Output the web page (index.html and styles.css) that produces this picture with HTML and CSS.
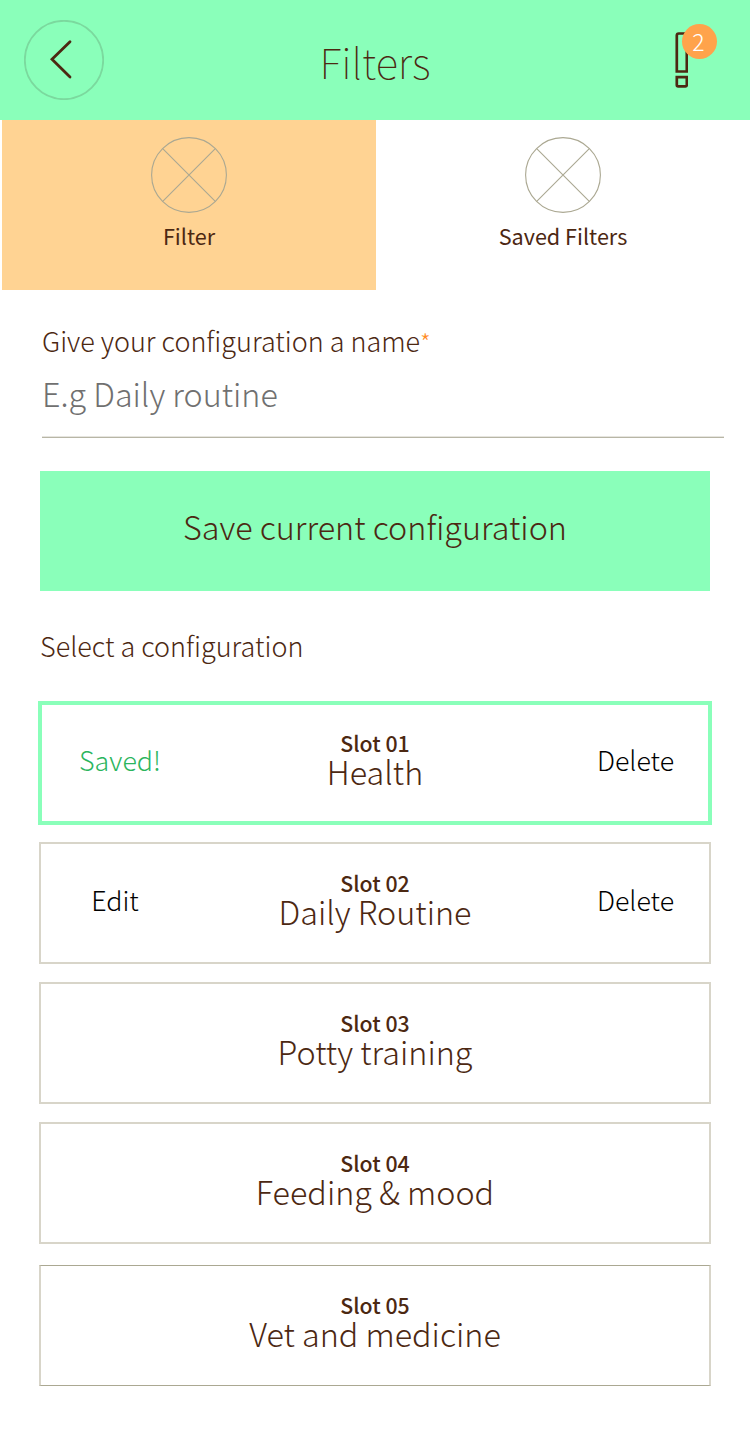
FILE: index.html
```html
<!DOCTYPE html>
<html lang="en">
<head>
<meta charset="utf-8">
<title>Filters</title>
<link rel="stylesheet" href="styles.css">
</head>
<body>
<header class="topbar">
  <button class="back" aria-label="Back"><svg width="80" height="80" viewBox="0 0 80 80"><circle cx="40" cy="40" r="39.2"/><path d="M46 21.7 28 39.3 46 57"/></svg></button>
  <h1 class="title">Filters</h1>
  <div class="alerts">
    <svg width="14" height="58" viewBox="0 0 14 58"><path d="M4.8 3.5H12.8V41.5H2.8V5.5Q2.8 3.5 4.8 3.5Z"/><path d="M2.8 47.2H12.8V55Q12.8 56.3 11.4 56.3H4.2Q2.8 56.3 2.8 55Z"/></svg>
    <span class="badge">2</span>
  </div>
</header>
<nav class="tabs">
  <a class="tab active"><svg width="76" height="76" viewBox="0 0 76 76"><circle cx="38" cy="38" r="37.4"/><path d="M11.7 11.7 64.3 64.3M64.3 11.7 11.7 64.3"/></svg><span>Filter</span></a>
  <a class="tab"><svg width="76" height="76" viewBox="0 0 76 76"><circle cx="38" cy="38" r="37.4"/><path d="M11.7 11.7 64.3 64.3M64.3 11.7 11.7 64.3"/></svg><span>Saved Filters</span></a>
</nav>
<main class="content">
  <div class="field">
    <label class="label">Give your configuration a name<span class="star">*</span></label>
    <div class="input">E.g Daily routine</div>
  </div>
  <button class="save">Save current configuration</button>
  <h2 class="label select">Select a configuration</h2>
  <section class="slots">
    <article class="slot selected"><span class="action saved">Saved!</span><div class="info"><b>Slot 01</b><span class="name">Health</span></div><span class="action delete">Delete</span></article>
    <article class="slot"><span class="action">Edit</span><div class="info"><b>Slot 02</b><span class="name">Daily Routine</span></div><span class="action delete">Delete</span></article>
    <article class="slot"><div class="info"><b>Slot 03</b><span class="name">Potty training</span></div></article>
    <article class="slot"><div class="info"><b>Slot 04</b><span class="name">Feeding &amp; mood</span></div></article>
    <article class="slot last"><div class="info"><b>Slot 05</b><span class="name">Vet and medicine</span></div></article>
  </section>
</main>
</body>
</html>
```
FILE: styles.css
```css
* { box-sizing: border-box; }
body {
  margin: 0;
  width: 750px;
  height: 1435px;
  background: #fff;
  color: #4c2812;
  font-family: "Noto Sans CJK SC", "Noto Sans", sans-serif;
  font-weight: 300;
}
svg { display: block; fill: none; }
button { padding: 0; border: 0; background: none; color: inherit; font: inherit; }
.topbar {
  display: grid;
  grid-template-columns: 80px 1fr 80px;
  height: 120px;
  padding: 20px 24px 0;
  background: #8affba;
}
.back { width: 80px; height: 80px; }
.back svg { stroke: #4c2812; stroke-width: 2.8; stroke-linecap: round; }
.back circle { stroke: #7bd99e; stroke-width: 1.8; }
.title { margin: 0; padding-top: 11px; text-align: center; font-size: 42px; line-height: 60px; font-weight: 100; }
.alerts { position: relative; padding: 10px 0 0 28px; }
.alerts svg { stroke: #4c2812; stroke-width: 2.7; }
.badge {
  position: absolute; left: 36px; top: 4px; width: 35px; height: 35px;
  border-radius: 50%; background: #ffa34b; color: #fff;
  font-size: 23px; line-height: 35px; text-align: center; padding-right: 2px;
}
.tabs { display: grid; grid-template-columns: 374px 374px; height: 170px; padding-left: 2px; }
.tab { display: flex; flex-direction: column; align-items: center; padding-top: 17px; font-size: 21.6px; line-height: 30px; font-weight: 400; }
.tab span { padding-top: 8px; }
.tab svg { stroke: #aba892; stroke-width: 1.1; }
.active { background: #ffd393; }
.content { padding: 0 40px; }
.field { margin: 0 -14px 0 2px; padding-top: 31px; height: 148px; border-bottom: 1px solid #b8b6a6; box-shadow: inset 0 -1px #e6e5df; }
.label { display: block; font-size: 26.97px; line-height: 40px; font-weight: 300; }
.star { color: #ff8b22; font-size: 24px; line-height: 1; }
.input { color: #707070; font-size: 32.25px; line-height: 50px; padding-top: 7px; }
.save { display: block; width: 670px; height: 120px; margin-top: 33px; background: #8affba; font-size: 32.3px; line-height: 110px; padding-bottom: 10px; }
.select { margin: 35px 0 0; }
.slots { margin: 35px -1px 0; display: flex; flex-direction: column; gap: 18px; }
.slot {
  display: grid; grid-template-columns: 148px 1fr 148px; height: 122px;
  border: 2px solid #d8d5c9;
}
.slot.selected { border: 4px solid #8affba; margin: 0 -1px -1px; height: 124px; }
.action { text-align: center; color: #000; font-size: 26.8px; line-height: 40px; padding-top: 36px; }
.delete { padding-left: 1px; }
.selected .action { padding-top: 35px; }
.selected .delete { padding-left: 3px; }
.selected .saved { padding-left: 8px; color: #2bb55d; }
.info { grid-column: 2; display: flex; flex-direction: column; align-items: center; padding-top: 27px; }
.selected .info { padding-top: 26px; }
.info b { font-size: 21.3px; line-height: 24px; font-weight: 500; }
.name { font-size: 32.3px; line-height: 32px; }
.last { margin-top: 3px; height: 121px; border-top: 1px solid #aba892; border-bottom: 1px solid #aba892; }
```
